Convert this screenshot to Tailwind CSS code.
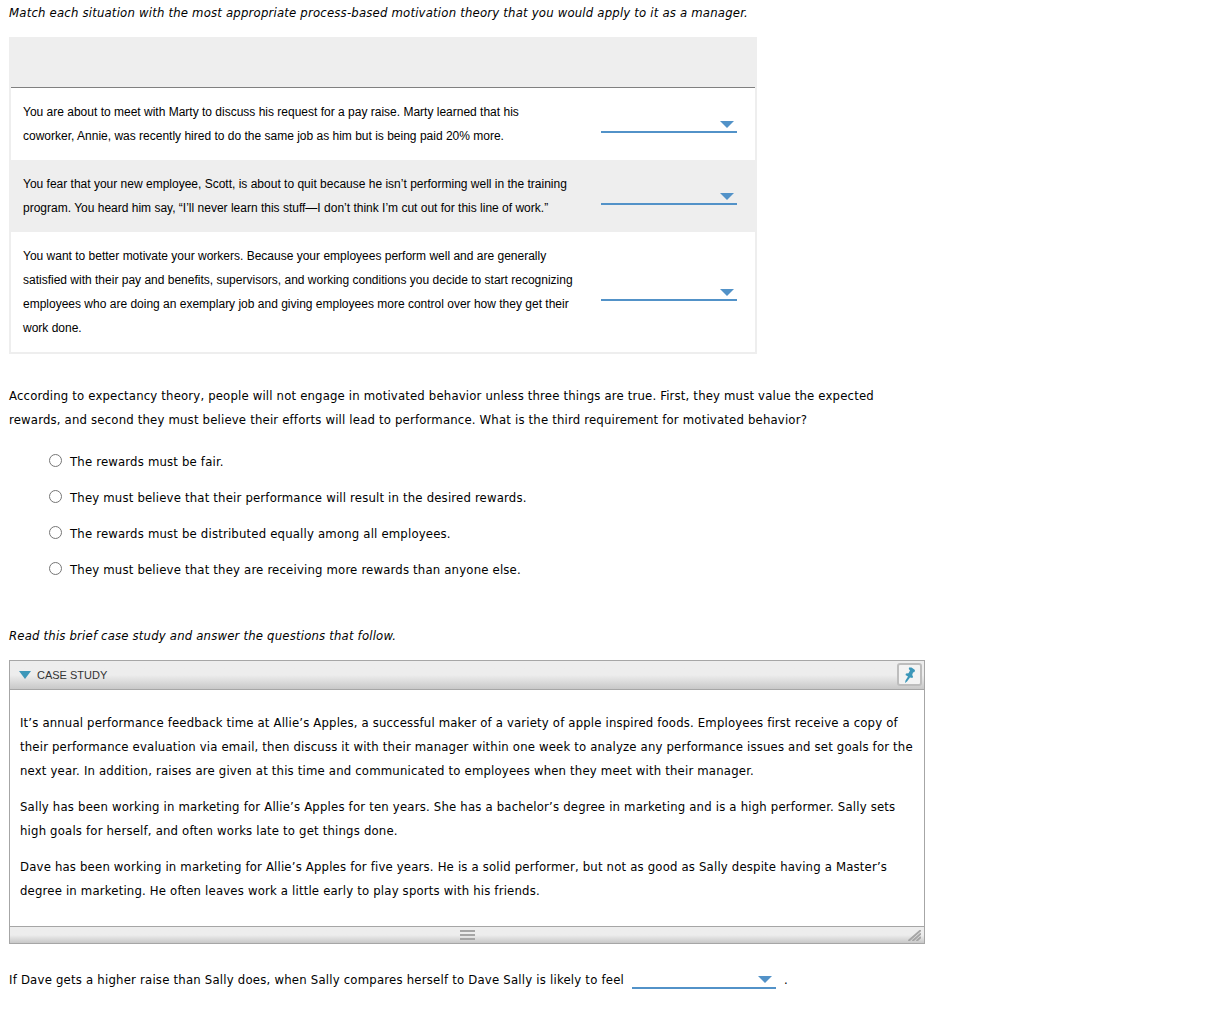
<!DOCTYPE html>
<html lang="en">
  <head>
    <meta charset="UTF-8">
    <meta name="viewport" content="width=device-width, initial-scale=1.0">
    <title>Motivation Theories</title>
    <script src="https://cdn.jsdelivr.net/npm/@tailwindcss/browser@4"></script>
  </head>

  <body class="bg-white pl-[9px] pt-px font-['DejaVu_Sans_Condensed','DejaVu_Sans',sans-serif] text-[13px] leading-6 tracking-[0.18px] whitespace-nowrap text-black [font-stretch:condensed]">
    <p class="italic tracking-[0.19px]">Match each situation with the most appropriate process-based motivation theory that you would apply to it as a manager.</p>

    <div class="mt-3 w-[748px] border-2 border-[#eee] font-['Liberation_Sans',Arial,sans-serif] text-xs/6 tracking-normal">
      <div class="h-[49px] border-b border-[#808080] bg-[#eee]"></div>
      <div class="flex h-[72px] justify-between py-3 pr-[18px] pl-3">
        <p>You are about to meet with Marty to discuss his request for a pay raise. Marty learned that his<br>coworker, Annie, was recently hired to do the same job as him but is being paid 20% more.</p>
        <div class="mt-[13px] flex h-5 w-[136px] justify-end border-b-2 border-[#5292c8] pt-2 pr-[3px]">
          <svg class="h-[7px] w-3.5" viewBox="0 0 14 7" fill="#5292c8"><path d="M0 0h14L7 7z"/></svg>
        </div>
      </div>
      <div class="flex h-[72px] justify-between bg-[#eee] py-3 pr-[18px] pl-3">
        <p>You fear that your new employee, Scott, is about to quit because he isn’t performing well in the training<br>program. You heard him say, “I’ll never learn this stuff—I don’t think I’m cut out for this line of work.”</p>
        <div class="mt-[13px] flex h-5 w-[136px] justify-end border-b-2 border-[#5292c8] pt-2 pr-[3px]">
          <svg class="h-[7px] w-3.5" viewBox="0 0 14 7" fill="#5292c8"><path d="M0 0h14L7 7z"/></svg>
        </div>
      </div>
      <div class="flex h-[120px] justify-between py-3 pr-[18px] pl-3">
        <p>You want to better motivate your workers. Because your employees perform well and are generally<br>satisfied with their pay and benefits, supervisors, and working conditions you decide to start recognizing<br>employees who are doing an exemplary job and giving employees more control over how they get their<br>work done.</p>
        <div class="mt-[37px] flex h-5 w-[136px] justify-end border-b-2 border-[#5292c8] pt-2 pr-[3px]">
          <svg class="h-[7px] w-3.5" viewBox="0 0 14 7" fill="#5292c8"><path d="M0 0h14L7 7z"/></svg>
        </div>
      </div>
    </div>

    <p class="mt-[30px]"><span class="tracking-[0.17px]">According to expectancy theory, people will not engage in motivated behavior unless three things are true. First, they must value the expected</span><br>rewards, and second they must believe their efforts will lead to performance. What is the third requirement for motivated behavior?</p>

    <div class="mt-[18px] flex flex-col gap-3 pl-10">
      <label class="flex"><i class="mt-1 mr-2 size-[13px] rounded-full border border-[#767676] bg-white"></i>The rewards must be fair.</label>
      <label class="flex"><i class="mt-1 mr-2 size-[13px] rounded-full border border-[#767676] bg-white"></i>They must believe that their performance will result in the desired rewards.</label>
      <label class="flex"><i class="mt-1 mr-2 size-[13px] rounded-full border border-[#767676] bg-white"></i>The rewards must be distributed equally among all employees.</label>
      <label class="flex"><i class="mt-1 mr-2 size-[13px] rounded-full border border-[#767676] bg-white"></i>They must believe that they are receiving more rewards than anyone else.</label>
    </div>

    <p class="mt-[42px] italic">Read this brief case study and answer the questions that follow.</p>

    <div class="mt-3 w-[916px] border border-[#a6a6a6]">
      <div class="flex h-[29px] border-b border-[#a6a6a6] bg-linear-to-b from-[#ededed] from-50% to-[#c8c8c8] pt-0.5 pr-0.5 pl-[9px] font-['Liberation_Sans',Arial,sans-serif] text-[11px] tracking-normal text-[#333]">
        <svg class="mt-2 mr-1.5 h-2 w-3" viewBox="0 0 12 8" fill="#3c97b9"><path d="M0 0h12L6 8z"/></svg>
        <span>CASE STUDY</span>
        <div class="ml-auto flex h-[23px] w-[25px] items-center justify-center rounded-[3px] border-2 border-[#bdbdbd] bg-[#f3f3f3]">
          <svg class="h-4 w-3" viewBox="0 0 12 16" fill="#3c97b9"><path d="M5 .5h2.500L11 3l-.5 2L9 5.500 8.200 8 9 9.500 8.500 11 6 10.500 3 14.500 1 16l.5-2.500L4 9.500 1.500 8 2 6.500l2.500-.2L6 3.500 4.800 2z"/></svg>
        </div>
      </div>
      <div class="flex h-[236px] flex-col gap-3 px-2.5 pt-[21px]">
        <p><span class="tracking-[0.165px]">It’s annual performance feedback time at Allie’s Apples, a successful maker of a variety of apple inspired foods. Employees first receive a copy of</span><br><span class="tracking-[0.17px]">their performance evaluation via email, then discuss it with their manager within one week to analyze any performance issues and set goals for the</span><br>next year. In addition, raises are given at this time and communicated to employees when they meet with their manager.</p>
        <p><span class="tracking-[0.19px]">Sally has been working in marketing for Allie’s Apples for ten years. She has a bachelor’s degree in marketing and is a high performer. Sally sets</span><br>high goals for herself, and often works late to get things done.</p>
        <p>Dave has been working in marketing for Allie’s Apples for five years. He is a solid performer, but not as good as Sally despite having a Master’s<br>degree in marketing. He often leaves work a little early to play sports with his friends.</p>
      </div>
      <div class="flex h-[17px] justify-end border-t border-[#a6a6a6] bg-linear-to-b from-[#ededed] from-50% to-[#c8c8c8] pt-[3px] pr-[3px]">
        <svg class="mr-[433px] h-2.5 w-[15px]" viewBox="0 0 15 10" fill="#a6a6a6"><path d="M0 0h15v2H0zM0 4h15v2H0zM0 8h15v2H0z"/></svg>
        <svg class="h-[11px] w-[13px]" viewBox="0 0 13 11" stroke="#a6a6a6" stroke-width="2"><path d="M.5 11L13 0M4.500 11L13 3.500M8.500 11L13 7"/></svg>
      </div>
    </div>

    <div class="mt-6 flex">
      <p class="w-[615px] tracking-[0.21px]">If Dave gets a higher raise than Sally does, when Sally compares herself to Dave Sally is likely to feel</p>
      <div class="mx-2 flex h-[21px] w-36 justify-end border-b-2 border-[#5292c8] pt-2 pr-1">
        <svg class="h-[7px] w-3.5" viewBox="0 0 14 7" fill="#5292c8"><path d="M0 0h14L7 7z"/></svg>
      </div>
      .
    </div>
  </body>
</html>
